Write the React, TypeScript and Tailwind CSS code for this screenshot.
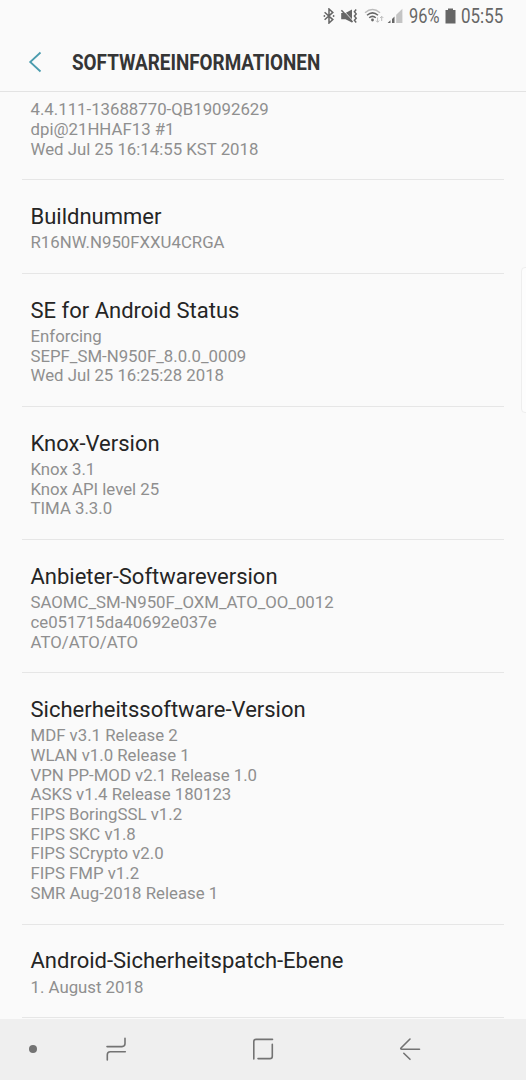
import React from 'react';

interface InfoItem {
    title?: string;
    lines: string[];
}

const ITEMS: InfoItem[] = [
    { lines: ['4.4.111-13688770-QB19092629', 'dpi@21HHAF13 #1', 'Wed Jul 25 16:14:55 KST 2018'] },
    { title: 'Buildnummer', lines: ['R16NW.N950FXXU4CRGA'] },
    { title: 'SE for Android Status', lines: ['Enforcing', 'SEPF_SM-N950F_8.0.0_0009', 'Wed Jul 25 16:25:28 2018'] },
    { title: 'Knox-Version', lines: ['Knox 3.1', 'Knox API level 25', 'TIMA 3.3.0'] },
    { title: 'Anbieter-Softwareversion', lines: ['SAOMC_SM-N950F_OXM_ATO_OO_0012', 'ce051715da40692e037e', 'ATO/ATO/ATO'] },
    {
        title: 'Sicherheitssoftware-Version',
        lines: [
            'MDF v3.1 Release 2',
            'WLAN v1.0 Release 1',
            'VPN PP-MOD v2.1 Release 1.0',
            'ASKS v1.4 Release 180123',
            'FIPS BoringSSL v1.2',
            'FIPS SKC v1.8',
            'FIPS SCrypto v2.0',
            'FIPS FMP v1.2',
            'SMR Aug-2018 Release 1',
        ],
    },
    { title: 'Android-Sicherheitspatch-Ebene', lines: ['1. August 2018'] },
];

const StatusBar: React.FC = () => (
    <div className="h-8 shrink-0 flex items-center pl-[323px] text-[#666666]">
        {/* Bluetooth */}
        <svg className="w-3 h-4 shrink-0" viewBox="0 0 12 16" fill="none" stroke="currentColor" strokeWidth="1.5">
            <path d="M1.6 4.3 L9.8 11.6 L6 15 V1 L9.8 4.4 L1.6 11.7" />
            <circle cx="1.4" cy="8" r="0.9" fill="currentColor" stroke="none" />
            <circle cx="10.6" cy="8" r="0.9" fill="currentColor" stroke="none" />
        </svg>
        {/* Muted with vibration */}
        <svg className="ml-[5px] w-[18px] h-4 shrink-0" viewBox="0 0 18 16" fill="none" stroke="currentColor">
            <path d="M1.2 5 H5.5 L12 1.6 V14.4 L5.5 11.2 H1.2 Z" fill="currentColor" stroke="none" />
            <path d="M2.6 1.8 L13.4 13.2" stroke="#fafafa" strokeWidth="1" />
            <path d="M1.4 2.2 L12.6 14" strokeWidth="1.5" />
            <path d="M16.2 1.6 L14.4 3.7 L16.2 5.9 L14.4 8 L16.2 10.2 L14.4 12.3 L16.2 14.4" strokeWidth="1.5" />
        </svg>
        {/* Wi-Fi with traffic arrows */}
        <svg className="ml-[6px] w-5 h-4 shrink-0" viewBox="0 0 20 16" fill="none" stroke="currentColor" strokeWidth="1.5">
            <path d="M1 4.7 Q8.5 -1.7 16 4.7" stroke="#bcbcbc" />
            <path d="M3 7.3 Q8.5 2.4 14 7.3" />
            <path d="M5.2 9.8 Q8.5 7 11.8 9.8" />
            <circle cx="8.5" cy="12" r="1.4" fill="currentColor" stroke="none" />
            <path d="M13.6 9.5 V14 M12 12.6 L13.6 14.3 L15.2 12.6 M17.7 13 V8.5 M16.1 10 L17.7 8.3 L19.3 10" stroke="#bcbcbc" strokeWidth="1" />
        </svg>
        {/* Mobile signal */}
        <svg className="ml-[3px] w-4 h-4 shrink-0" viewBox="0 0 16 16" fill="currentColor">
            <path d="M0.6 15 L3.5 12.3 V15 Z" />
            <path d="M5 11 L7.5 8.6 V15 H5 Z" />
            <path d="M9.2 6.8 L15.4 0.8 V15 H9.2 Z" fill="#c4c4c4" />
        </svg>
        <span className="ml-[6px] w-[32px] text-[20px] whitespace-nowrap">
            <span className="inline-block origin-left scale-x-[0.82]">96%</span>
        </span>
        <svg className="ml-[4px] w-[11px] h-4 shrink-0" viewBox="0 0 11 16" fill="currentColor">
            <path d="M3 0.5 H8 V2 H10.5 V15.5 H0.5 V2 H3 Z" />
        </svg>
        <span className="ml-[5px] w-[44px] text-[20px] whitespace-nowrap">
            <span className="inline-block origin-left scale-x-[0.85]">05:55</span>
        </span>
    </div>
);

const Header: React.FC = () => (
    <header className="h-[60px] shrink-0 flex items-center pl-[28px] border-b border-[#e3e3e3]">
        <svg className="w-[14px] h-[22px] shrink-0" viewBox="0 0 14 22" fill="none" stroke="#4b9cae" strokeWidth="1.8">
            <path d="M12.5 1.5 L2.2 11 L12.5 20.5" />
        </svg>
        <h1 className="ml-[30px] pt-px text-[22px] font-bold text-[#353535] whitespace-nowrap origin-left scale-x-[0.857]">
            SOFTWAREINFORMATIONEN
        </h1>
    </header>
);

const InfoSection: React.FC<{ item: InfoItem }> = ({ item }) => (
    <section className="mx-[22px] px-[8.5px] pb-[20px] border-b border-[#e6e6e6]">
        {item.title ? (
            <h2 className="pt-[22.9px] pb-[1.6px] text-[22px] leading-[28.5px] text-[#252525] whitespace-nowrap">{item.title}</h2>
        ) : (
            <div className="h-[8.2px]" />
        )}
        {item.lines.map((line) => (
            <p key={line} className="text-[16.8px] leading-[19.7px] text-[#8f8f8f] whitespace-nowrap">{line}</p>
        ))}
    </section>
);

const NavBar: React.FC = () => (
    <nav className="h-[61px] shrink-0 flex items-center pl-[29px] pb-px bg-[#efefef] text-[#737373]">
        <span className="w-2 h-2 rounded-full bg-[#737373]" />
        {/* Recents */}
        <svg className="ml-[68px] w-[22px] h-6" viewBox="0 0 22 24" fill="none" stroke="currentColor" strokeWidth="1.6" strokeLinecap="round">
            <path d="M2 9.6 H17 Q20 9.6 20 6.6 V1.3" />
            <path d="M20.3 14.8 H5.3 Q2.3 14.8 2.3 17.8 V23" />
        </svg>
        {/* Home */}
        <svg className="ml-[125px] w-[22px] h-6" viewBox="0 0 22 24" fill="none" stroke="currentColor" strokeWidth="1.6" strokeLinecap="round">
            <path d="M1.8 22 V4.6 Q1.8 2.4 4 2.4 H20.5" />
            <path d="M20.3 7.3 V19.2 Q20.3 21.6 17.9 21.6 H6" />
        </svg>
        {/* Back */}
        <svg className="ml-[125px] w-[22px] h-6" viewBox="0 0 22 24" fill="none" stroke="currentColor" strokeWidth="1.6" strokeLinecap="round" strokeLinejoin="round">
            <path d="M11 2 L2 11 Q1.2 12.2 2.8 12.2 H20.5" />
            <path d="M4.8 16.3 L11 22.3" />
        </svg>
    </nav>
);

export default function App() {
    return (
        <div className="relative w-[526px] h-[1080px] flex flex-col overflow-hidden bg-[#fafafa] font-['Roboto',sans-serif]">
            <StatusBar />
            <Header />
            <main className="flex-1 min-h-0 overflow-hidden">
                {ITEMS.map((item) => (
                    <InfoSection key={item.lines[0]} item={item} />
                ))}
            </main>
            <NavBar />
            {/* Edge panel handle */}
            <div className="absolute top-[267px] left-[521px] w-2.5 h-[146px] rounded-[4px] border border-[#eeeeee] bg-[#fdfdfd]" />
        </div>
    );
}
